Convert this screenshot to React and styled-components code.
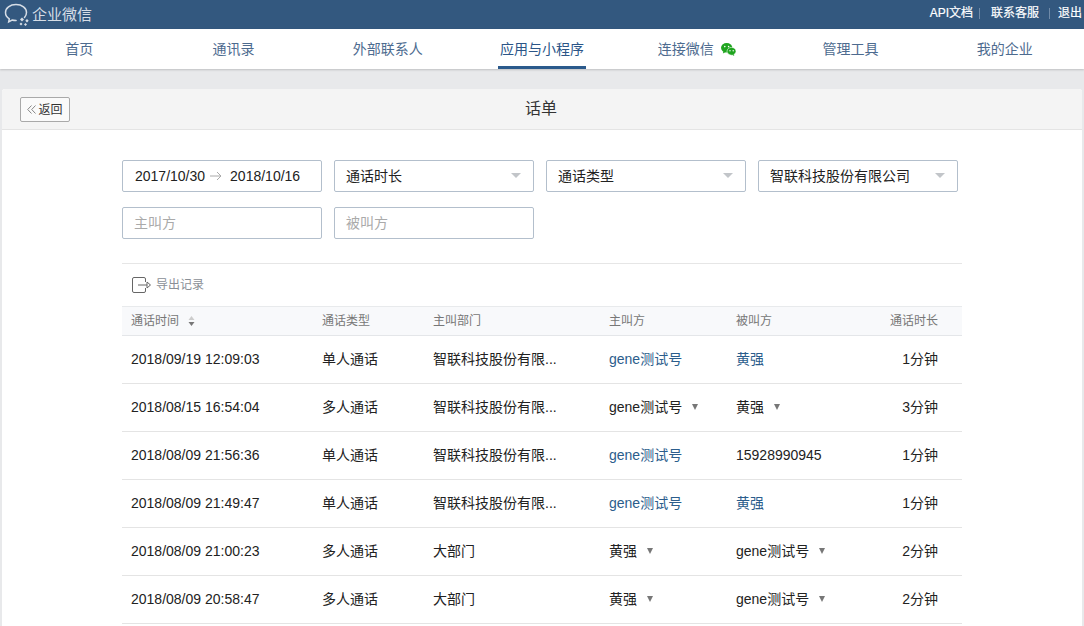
import styled, { createGlobalStyle } from "styled-components"

const Global = createGlobalStyle`
html, body {
  margin: 0;
  height: 626px;
  overflow: hidden;
  background: #e8e9eb;
  font-family: "Liberation Sans", "Noto Sans CJK SC", sans-serif;
  font-size: 14px;
  line-height: 20px;
  color: #222;
}
`

const Header = styled.header`
height: 29px;
background: #33587f;
display: flex;
align-items: center;
justify-content: space-between;
padding: 0 2px 0 3px;
`

const Logo = styled.div`
display: flex;
align-items: center;
gap: 2px;
color: #d6dde6;
font-size: 15px;
`

const TopLinks = styled.div`
display: flex;
align-items: center;
color: #fff;
font-size: 12px;
-webkit-text-stroke: 0.2px #fff;
padding-bottom: 3px;
`

const TopLink = styled.a`
color: #fff;
padding-right: ${p => p.$pad}px;
margin-right: ${p => p.$gap}px;
border-right: ${p => (p.$last ? "none" : "1px solid #6f8aa8")};
line-height: 11px;
`

const Nav = styled.nav`
height: 40px;
background: #fff;
box-shadow: 0 1px 2px rgba(0, 0, 0, 0.18);
display: grid;
grid-template-columns: repeat(7, 1fr);
padding: 0 2px;
position: relative;
`

const NavItem = styled.a`
display: flex;
align-items: center;
justify-content: center;
gap: 5px;
height: 40px;
`

const NavLabel = styled.span`
height: 40px;
display: flex;
align-items: center;
padding: 0 2px;
box-sizing: border-box;
font-size: 14px;
color: ${p => (p.$active ? "#2b5587" : "#4d6b8f")};
box-shadow: ${p => (p.$active ? "inset 0 -3px 0 #2b5a8c" : "none")};
`

const NavIcon = styled.span`
display: flex;
margin-right: 1px;
`

const Panel = styled.main`
margin: 20px 2px 0;
background: #fff;
border-radius: 3px 3px 0 0;
height: 537px;
`

const PanelHead = styled.div`
height: 41px;
background: #f4f4f4;
border-bottom: 1px solid #e4e4e4;
box-sizing: border-box;
display: flex;
align-items: center;
justify-content: center;
position: relative;
font-size: 16px;
color: #333;
padding: 0 2px 1px 0;
border-radius: 3px 3px 0 0;
`

const BackButton = styled.button`
position: absolute;
left: 18px;
top: 8px;
width: 50px;
height: 25px;
background: #fafafa;
border: 1px solid #a9a9a9;
border-radius: 2px;
padding: 0;
font: 12px/20px "Liberation Sans", "Noto Sans CJK SC", sans-serif;
color: #333;
display: flex;
align-items: center;
justify-content: center;
gap: 2px;
`

const Content = styled.div`
width: 840px;
margin-left: 120px;
`

const Filters = styled.div`
display: flex;
flex-wrap: wrap;
gap: 15px 12px;
padding-top: 30px;
padding-bottom: 24px;
border-bottom: 1px solid #e6e6e6;
`

const Field = styled.div`
width: 200px;
height: 32px;
box-sizing: border-box;
border: 1px solid #b3bfcc;
border-radius: 2px;
background: #fff;
display: flex;
align-items: center;
justify-content: space-between;
padding: 0 12px 0 11px;
font-size: 14px;
color: ${p => (p.$placeholder ? "#aaa" : "#222")};
`

const DateField = styled(Field)`
justify-content: flex-start;
padding-left: 12px;
`

const Arrow = styled.span`
display: inline-flex;
margin: 0 8px 0 5px;
`

const Caret = styled.span`
width: 0;
height: 0;
border-left: 5px solid transparent;
border-right: 5px solid transparent;
border-top: 5px solid #c2c5c9;
margin-top: -2px;
`

const ExportRow = styled.div`
height: 42px;
display: flex;
align-items: center;
gap: 4px;
padding-left: 10px;
color: #8a8f96;
font-size: 12px;
`

const TableHead = styled.div`
display: grid;
grid-template-columns: 191px 111px 176px 127px 100px 1fr;
height: 30px;
box-sizing: border-box;
align-items: center;
padding: 0 24px 1px 9px;
background: #f8f9fb;
border-top: 1px solid #e8eaec;
border-bottom: 1px solid #e4e6e9;
font-size: 12px;
color: #777;
`

const Row = styled.div`
display: grid;
grid-template-columns: 191px 111px 176px 127px 100px 1fr;
height: 48px;
box-sizing: border-box;
align-items: center;
padding: 0 24px 1px 9px;
border-bottom: 1px solid #e4e4e4;
font-size: 14px;
color: #222;
`

const SortCell = styled.span`
display: flex;
align-items: center;
gap: 9px;
`

const RightCell = styled.span`
text-align: right;
`

const Person = styled.span`
display: flex;
align-items: center;
gap: 10px;
color: ${p => (p.$link ? "#2b5d8c" : "#222")};
`

const MiniCaret = styled.span`
width: 0;
height: 0;
border-left: 3.5px solid transparent;
border-right: 3.5px solid transparent;
border-top: 6px solid #777;
`

function LogoIcon() {
    return (
        <svg width="27" height="25" viewBox="0 0 27 25" fill="none">
            <path d="M21.500 15.500c1.300-1.400 2-3.100 2-5C23.500 6 19 2.500 13 2.500S2.500 6 2.500 10.500c0 2.700 1.500 4.900 3.800 6.300l-.6 3 3.400-1.800c1.300.4 2.700.5 4 .5" stroke="#d6dde6" strokeWidth="1.500" strokeLinecap="round" />
            <path d="M19 15.500l2 2-2 2-2-2z" fill="#d6dde6" />
            <path d="M24 17l1.700 1.700-1.700 1.700-1.700-1.700z" fill="#d6dde6" />
            <path d="M18 20.500l1.500 1.500-1.500 1.500-1.500-1.500z" fill="#d6dde6" />
            <path d="M22.500 21l1.500 1.500-1.500 1.500-1.500-1.500z" fill="#d6dde6" />
        </svg>
    )
}

function WechatIcon() {
    return (
        <svg width="15" height="13" viewBox="0 0 15 13">
            <ellipse cx="5.700" cy="4.800" rx="5.700" ry="4.800" fill="#1fa41f" />
            <path d="M2.500 8l-.6 2.500 2.800-1.500z" fill="#1fa41f" />
            <ellipse cx="10.500" cy="8.300" rx="4.500" ry="3.900" fill="#1fa41f" stroke="#fff" strokeWidth=".6" />
            <path d="M12.500 11l.8 2-2.400-1.200z" fill="#1fa41f" />
            <circle cx="3.800" cy="3.600" r=".8" fill="#fff" />
            <circle cx="7.600" cy="3.600" r=".8" fill="#fff" />
            <circle cx="9" cy="7.700" r=".7" fill="#fff" />
            <circle cx="12.200" cy="7.700" r=".7" fill="#fff" />
        </svg>
    )
}

function ExportIcon() {
    return (
        <svg width="20" height="16" viewBox="0 0 20 16" fill="none" stroke="#666" strokeWidth="1">
            <path d="M13.500 5V2A1.500 1.500 0 0 0 12 .5H2A1.500 1.500 0 0 0 .5 2v12A1.500 1.500 0 0 0 2 15.500h10a1.500 1.500 0 0 0 1.500-1.500v-3" />
            <path d="M6 8h12" />
            <path d="M15 5l3.500 3-3.500 3z" fill="#fff" />
        </svg>
    )
}

function SortIcon() {
    return (
        <svg width="7" height="10" viewBox="0 0 7 10">
            <path d="M3.500 0L6.500 4H.5z" fill="#ccc" />
            <path d="M3.500 10L.5 6h6z" fill="#777" />
        </svg>
    )
}

function DateArrow() {
    return (
        <svg width="12" height="10" viewBox="0 0 12 10" fill="none" stroke="#aaa" strokeWidth="1">
            <path d="M0 5h11M7 1l4 4-4 4" />
        </svg>
    )
}

function BackIcon() {
    return (
        <svg width="9" height="9" viewBox="0 0 9 9" fill="none" stroke="#888" strokeWidth="1">
            <path d="M4.500 .5L.7 4.500l3.800 4M8.500 .5L4.700 4.500l3.800 4" />
        </svg>
    )
}

const navItems = ["首页", "通讯录", "外部联系人", "应用与小程序", "连接微信", "管理工具", "我的企业"]

const company = "智联科技股份有限..."

const rows = [
    { time: "2018/09/19 12:09:03", type: "单人通话", dept: company, from: "gene测试号", fromLink: true, to: "黄强", toLink: true, len: "1分钟" },
    { time: "2018/08/15 16:54:04", type: "多人通话", dept: company, from: "gene测试号", fromCaret: true, to: "黄强", toCaret: true, len: "3分钟" },
    { time: "2018/08/09 21:56:36", type: "单人通话", dept: company, from: "gene测试号", fromLink: true, to: "15928990945", len: "1分钟" },
    { time: "2018/08/09 21:49:47", type: "单人通话", dept: company, from: "gene测试号", fromLink: true, to: "黄强", toLink: true, len: "1分钟" },
    { time: "2018/08/09 21:00:23", type: "多人通话", dept: "大部门", from: "黄强", fromCaret: true, to: "gene测试号", toCaret: true, len: "2分钟" },
    { time: "2018/08/09 20:58:47", type: "多人通话", dept: "大部门", from: "黄强", fromCaret: true, to: "gene测试号", toCaret: true, len: "2分钟" },
]

export default function App() {
    return (
        <>
            <Global />
            <Header>
                <Logo>
                    <LogoIcon />
                    企业微信
                </Logo>
                <TopLinks>
                    <TopLink $pad={6} $gap={11}>API文档</TopLink>
                    <TopLink $pad={10} $gap={8}>联系客服</TopLink>
                    <TopLink $pad={0} $gap={0} $last>退出</TopLink>
                </TopLinks>
            </Header>
            <Nav>
                {navItems.map(name => (
                    <NavItem key={name}>
                        <NavLabel $active={name === "应用与小程序"}>{name}</NavLabel>
                        {name === "连接微信" && <NavIcon><WechatIcon /></NavIcon>}
                    </NavItem>
                ))}
            </Nav>
            <Panel>
                <PanelHead>
                    <BackButton><BackIcon />返回</BackButton>
                    话单
                </PanelHead>
                <Content>
                    <Filters>
                        <DateField>2017/10/30<Arrow><DateArrow /></Arrow>2018/10/16</DateField>
                        <Field>通话时长<Caret /></Field>
                        <Field>通话类型<Caret /></Field>
                        <Field>智联科技股份有限公司<Caret /></Field>
                        <Field $placeholder>主叫方</Field>
                        <Field $placeholder>被叫方</Field>
                    </Filters>
                    <ExportRow><ExportIcon />导出记录</ExportRow>
                    <TableHead>
                        <SortCell>通话时间<SortIcon /></SortCell>
                        <span>通话类型</span>
                        <span>主叫部门</span>
                        <span>主叫方</span>
                        <span>被叫方</span>
                        <RightCell>通话时长</RightCell>
                    </TableHead>
                    {rows.map(r => (
                        <Row key={r.time}>
                            <span>{r.time}</span>
                            <span>{r.type}</span>
                            <span>{r.dept}</span>
                            <Person $link={r.fromLink}>{r.from}{r.fromCaret && <MiniCaret />}</Person>
                            <Person $link={r.toLink}>{r.to}{r.toCaret && <MiniCaret />}</Person>
                            <RightCell>{r.len}</RightCell>
                        </Row>
                    ))}
                </Content>
            </Panel>
        </>
    )
}
